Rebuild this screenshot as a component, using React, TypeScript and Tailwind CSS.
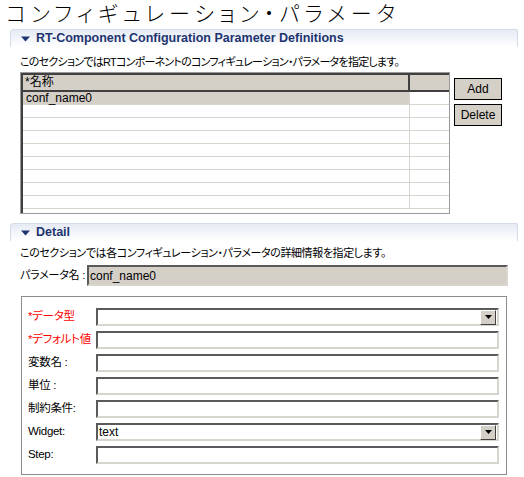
import { ReactNode } from 'react'

const jp = "font-['Liberation_Sans','Noto_Sans_CJK_JP',sans-serif] [font-feature-settings:'palt']"

function SectionHeader({ title }: { title: string }) {
  return (
    <div className="ml-[10px] flex h-[18px] w-[508px] items-center gap-[6px] rounded-tl-[4px] rounded-tr-[2px] border-t border-r border-l border-[#d3dbe8] bg-gradient-to-b from-[#e6ebf4] to-white pl-[10px]">
      <svg width="9" height="6" viewBox="0 0 9 6" aria-hidden>
        <path d="M0 0.5h9L4.5 5.5z" fill="#1d3470" />
      </svg>
      <span className="font-['Liberation_Sans',sans-serif] text-[12.5px] leading-none font-bold text-[#1d3470]">{title}</span>
    </div>
  )
}

function SunkenInput({ value, grey, combo }: { value?: string; grey?: boolean; combo?: boolean }) {
  return (
    <div
      className={`flex h-full w-full items-center border-2 border-t-[#5a5a5a] border-r-[#d8d5ce] border-b-[#d8d5ce] border-l-[#5a5a5a] ${grey ? 'bg-[#d4d0c8]' : 'bg-white'}`}
    >
      <span className="flex-1 pl-[1px] font-['Liberation_Sans',sans-serif] text-[12px] text-black">{value}</span>
      {combo && (
        <div className="mr-[1px] flex h-[15px] w-[16px] items-center justify-center border border-t-white border-r-[#404040] border-b-[#404040] border-l-white bg-[#d4d0c8]">
          <svg width="7" height="4" viewBox="0 0 7 4" aria-hidden>
            <path d="M0 0h7L3.5 4z" fill="#000" />
          </svg>
        </div>
      )}
    </div>
  )
}

function Field({ label, red, children }: { label: string; red?: boolean; children: ReactNode }) {
  return (
    <div className="flex h-[18px] items-center">
      <span className={`w-[68px] whitespace-nowrap ${jp} text-[11.5px] leading-none tracking-[-0.3px] ${red ? 'text-[#ff0000]' : 'text-black'}`}>
        {label}
      </span>
      <div className="h-[18px] flex-1">{children}</div>
    </div>
  )
}

export default function App() {
  const rows = Array.from({ length: 9 })
  return (
    <div className="h-[477px] w-[524px] overflow-hidden bg-white">
      <div className={`h-[29px] whitespace-nowrap pt-[3px] pl-[6px] ${jp} text-[21px] leading-[22px] tracking-[5.2px] font-light text-black`}>
        コンフィギュレーション・パラメータ
      </div>

      <SectionHeader title="RT-Component Configuration Parameter Definitions" />
      <div className={`mt-[8px] whitespace-nowrap pl-[20px] ${jp} text-[11px] leading-[14px] tracking-[-0.75px] text-black`}>
        このセクションではRTコンポーネントのコンフィギュレーション・パラメータを指定します。
      </div>

      <div className="mt-[3px] flex pl-[20px]">
        <div className="h-[142px] w-[430px] overflow-hidden border border-[#9a9a9a]">
          <div className="h-full border-t-2 border-l-2 border-t-[#404040] border-l-[#404040]">
            <div className="flex h-[17px] bg-[#d4d0c8]">
              <div className={`w-[387px] border-r-2 border-b-2 border-r-[#404040] border-b-[#404040] pl-[2px] ${jp} text-[12px] leading-[15px] text-black`}>
                *名称
              </div>
              <div className="flex-1 border-b-2 border-b-[#404040]" />
            </div>
            {rows.map((_, i) => (
              <div key={i} className="flex h-[13px] border-b border-[#d8d5ce]">
                <div
                  className={`w-[387px] border-r border-[#d8d5ce] pl-[3px] font-['Liberation_Sans',sans-serif] text-[12px] leading-[13px] text-black ${i === 0 ? 'bg-[#d4d0c8]' : ''}`}
                >
                  {i === 0 ? 'conf_name0' : ''}
                </div>
                <div className="flex-1" />
              </div>
            ))}
          </div>
        </div>
        <div className="ml-[4px] flex flex-col gap-[4px] pt-[6px]">
          {['Add', 'Delete'].map((b) => (
            <div
              key={b}
              className="flex h-[22px] w-[48px] items-center justify-center border border-black bg-[#d4d0c8] font-['Liberation_Sans',sans-serif] text-[12px] text-black"
            >
              {b}
            </div>
          ))}
        </div>
      </div>

      <div className="mt-[9px]">
        <SectionHeader title="Detail" />
      </div>
      <div className={`mt-[5px] whitespace-nowrap pl-[20px] ${jp} text-[11px] leading-[14px] tracking-[-0.4px] text-black`}>
        このセクションでは各コンフィギュレーション・パラメータの詳細情報を指定します。
      </div>
      <div className="mt-[5px] flex h-[21px] items-center pl-[20px]">
        <span className={`w-[67px] whitespace-nowrap ${jp} text-[11px] tracking-[-0.2px] text-black`}>パラメータ名 :</span>
        <div className="h-[21px] w-[421px]">
          <SunkenInput value="conf_name0" grey />
        </div>
      </div>

      <div className="mt-[10px] ml-[21px] flex h-[179px] w-[486px] flex-col gap-[5px] border border-[#8c8c8c] pt-[11px] pr-[7px] pl-[6px]">
        <Field label="*データ型" red>
          <SunkenInput combo />
        </Field>
        <Field label="*デフォルト値" red>
          <SunkenInput />
        </Field>
        <Field label="変数名 :">
          <SunkenInput />
        </Field>
        <Field label="単位 :">
          <SunkenInput />
        </Field>
        <Field label="制約条件:">
          <SunkenInput />
        </Field>
        <Field label="Widget:">
          <SunkenInput value="text" combo />
        </Field>
        <Field label="Step:">
          <SunkenInput />
        </Field>
      </div>
    </div>
  )
}
